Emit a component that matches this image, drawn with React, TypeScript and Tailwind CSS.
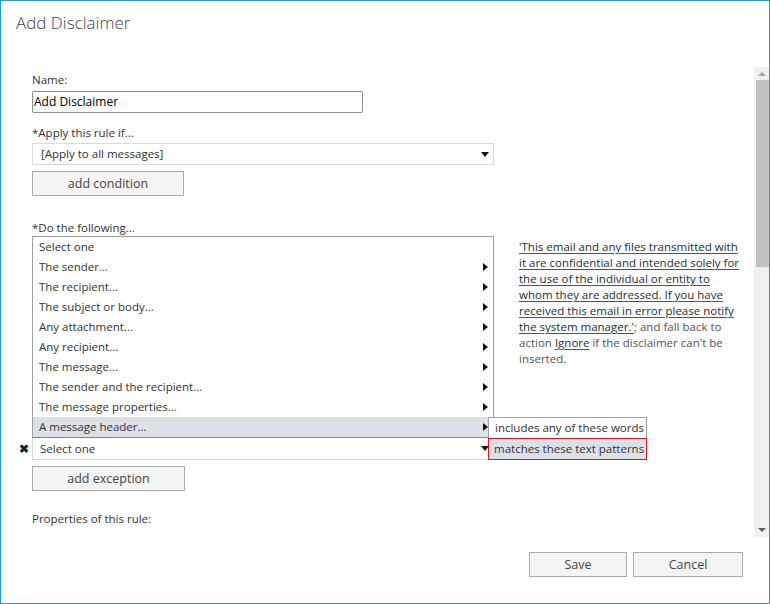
import React from 'react';

const font = { fontFamily: '"Open Sans", "Noto Sans", sans-serif' };

const ACTIONS = [
  { label: 'Select one', sub: false },
  { label: 'The sender...', sub: true },
  { label: 'The recipient...', sub: true },
  { label: 'The subject or body...', sub: true },
  { label: 'Any attachment...', sub: true },
  { label: 'Any recipient...', sub: true },
  { label: 'The message...', sub: true },
  { label: 'The sender and the recipient...', sub: true },
  { label: 'The message properties...', sub: true },
  { label: 'A message header...', sub: true, active: true },
];

function RightArrow() {
  return (
    <svg width="5" height="8" viewBox="0 0 5 8" className="flex-shrink-0">
      <path d="M0 0 L5 4 L0 8 Z" fill="#111" />
    </svg>
  );
}

function DownArrow() {
  return (
    <svg width="8" height="5" viewBox="0 0 8 5" className="flex-shrink-0">
      <path d="M0 0 L8 0 L4 5 Z" fill="#111" />
    </svg>
  );
}

function Button({ children, className }: { children: React.ReactNode; className: string }) {
  return (
    <div className={`flex items-center justify-center pt-px bg-[#f4f4f4] border border-[#a9acac] text-[12.5px] text-[#444] ${className}`}>
      {children}
    </div>
  );
}

export default function App() {
  return (
    <div className="w-[770px] h-[604px] border border-[#1a9fc7] bg-white flex flex-col text-[#333] overflow-hidden" style={font}>
      {/* Title */}
      <div className="h-[66px] pl-[15px] pt-[9px] text-[17px] font-light text-[#444] leading-[26px]">Add Disclaimer</div>

      {/* Scrollable body */}
      <div className="h-[470px] flex">
        <div className="flex-1 pl-[31px] pt-[5px] text-[11.5px] leading-[16px]">
          <div>Name:</div>
          <div className="mt-[3px] w-[331px] h-[22px] border border-[#8f8f8f] rounded-[2px] flex items-center pl-[1px] text-[12px] text-black">
            Add Disclaimer
          </div>

          <div className="mt-[12px]">*Apply this rule if...</div>
          <div className="mt-[2px] w-[462px] h-[22px] border border-[#dcdcdc] flex items-center justify-between pl-[8px] pr-[4px]">
            <span>[Apply to all messages]</span>
            <DownArrow />
          </div>
          <Button className="mt-[6px] w-[152px] h-[25px]">add condition</Button>

          <div className="mt-[24px]">*Do the following...</div>

          <div className="relative flex">
            <div className="w-[462px]">
              <div className="border border-[#a0a0a0] border-b-[#5f8fbd]">
                {ACTIONS.map(a => (
                  <div
                    key={a.label}
                    className={`h-[20px] flex items-center justify-between pl-[6px] pr-[5px] ${a.active ? 'bg-[#dde1e7]' : 'bg-white'}`}
                  >
                    <span>{a.label}</span>
                    {a.sub && <RightArrow />}
                  </div>
                ))}
              </div>
              <div className="relative h-[22px] border border-[#c7dde9] border-t-0 flex items-center justify-between pl-[7px] pr-[4px]">
                <span className="absolute left-[-14px] top-[3px] text-[12px] text-[#222] font-bold">✖</span>
                <span>Select one</span>
                <DownArrow />
              </div>
            </div>

            <p className="ml-[25px] mt-[3px] w-[224px] text-[11.5px] leading-[16px] text-[#555]">
              <span className="text-[#1e2e3a] underline underline-offset-2 decoration-[#2f5f80]">
                'This email and any files transmitted with it are confidential and intended solely for the use of the individual or entity to whom they are addressed. If you have received this email in error please notify the system manager.'
              </span>
              ; and fall back to action{' '}
              <span className="text-[#1e2e3a] underline underline-offset-2 decoration-[#2f5f80]">Ignore</span> if the disclaimer can't be inserted.
            </p>

            {/* Submenu flyout */}
            <div className="absolute left-[456px] top-[181px] w-[159px] bg-white border border-[#a0a0a0] border-b-0 text-[11.5px] whitespace-nowrap">
              <div className="h-[20px] flex items-center pl-[6px]">includes any of these words</div>
              <div className="h-[22px] flex items-center pl-[5px] bg-[#dde1e7] border border-[#e0121b] -mx-px">
                matches these text patterns
              </div>
            </div>
          </div>

          <Button className="mt-[6px] w-[153px] h-[25px]">add exception</Button>

          <div className="mt-[20px]">Properties of this rule:</div>
        </div>

        {/* Scrollbar */}
        <div className="w-[15px] bg-[#f0f0f0] flex flex-col items-end">
          <div className="w-full h-[13px] flex items-center justify-center">
            <svg width="8" height="4" viewBox="0 0 8 4"><path d="M0 4 L4 0 L8 4 Z" fill="#a3a3a3" /></svg>
          </div>
          <div className="w-[13px] h-[187px] bg-[#c1c1c1]" />
          <div className="flex-1" />
          <div className="w-full h-[14px] flex items-center justify-center">
            <svg width="8" height="4" viewBox="0 0 8 4"><path d="M0 0 L8 0 L4 4 Z" fill="#606060" /></svg>
          </div>
        </div>
      </div>

      {/* Footer */}
      <div className="flex-1 flex justify-end items-start pt-[15px] pr-[26px] gap-[6px]">
        <Button className="w-[98px] h-[25px]">Save</Button>
        <Button className="w-[110px] h-[25px]">Cancel</Button>
      </div>
    </div>
  );
}
